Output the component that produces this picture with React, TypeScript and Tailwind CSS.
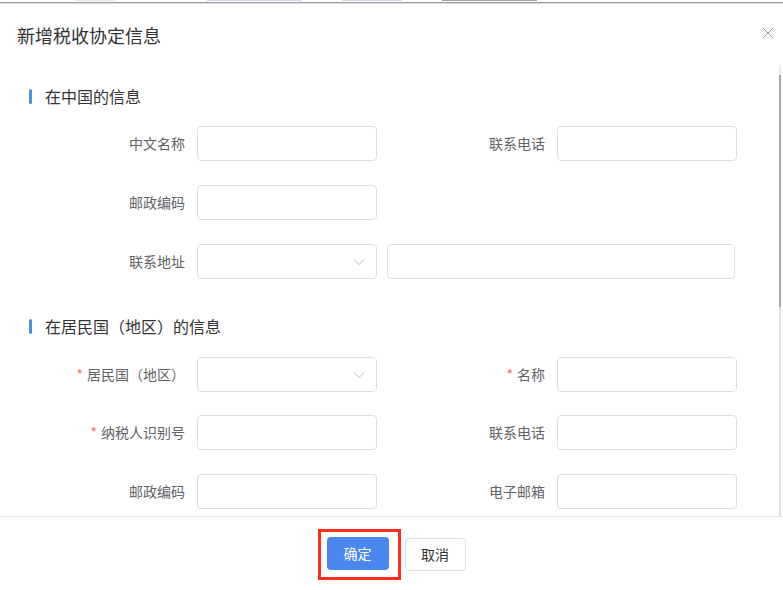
import React from "react";

const Chevron = () => (
  <svg width="12" height="8" viewBox="0 0 12 8" fill="none">
    <polyline points="1,1.5 6,6.5 11,1.5" stroke="#b4b8bf" strokeWidth="1" />
  </svg>
);

const Input = ({ w = "w-[180px]" }: { w?: string }) => (
  <div className={`${w} h-[35px] rounded-[4px] border border-[#dcdfe6] bg-white`} />
);

const Select = () => (
  <div className="w-[180px] h-[35px] rounded-[4px] border border-[#dcdfe6] bg-white flex items-center justify-end pr-[11px]">
    <Chevron />
  </div>
);

const Label = ({ text, req, w = "w-[120px]" }: { text: string; req?: boolean; w?: string }) => (
  <div className={`${w} text-right text-[14px] text-[#606266] leading-[35px] mr-[12px] shrink-0`}>
    {req && <span className="text-[#f56c6c] mr-[4px]">*</span>}
    {text}
  </div>
);

const Field = ({ label, req, select }: { label: string; req?: boolean; select?: boolean }) => (
  <div className="flex items-center">
    <Label text={label} req={req} />
    {select ? <Select /> : <Input />}
  </div>
);

const SectionTitle = ({ text }: { text: string }) => (
  <div className="flex items-center h-[20px] pl-[29px]">
    <div className="w-[3px] h-[15px] rounded-full bg-[#4a8fe3] mr-[13px]" />
    <span className="text-[16px] text-[#333] leading-[20px]">{text}</span>
  </div>
);

export default function App() {
  return (
    <div
      className="w-[783px] h-[590px] overflow-hidden bg-white flex flex-col"
      style={{ fontFamily: '"Noto Sans CJK SC", "Noto Sans", sans-serif' }}
    >
      {/* background page strip */}
      <div className="h-[5px] shrink-0 overflow-hidden bg-white">
        <div className="flex items-start h-[2px]">
          <div className="ml-[75px] w-[40px] h-[1px] bg-[#e2e2e2]" />
          <div className="ml-[92px] w-[95px] h-[1px] bg-[#cdd7ea]" />
          <div className="ml-[40px] w-[60px] h-[1px] bg-[#cdd7ea]" />
          <div className="ml-[40px] w-[95px] h-[1px] bg-[#a0a0a0]" />
        </div>
        <div className="h-[1px] bg-[#9a9a9a]" />
        <div className="h-[1px] bg-[#dcdcdc]" />
      </div>

      {/* header */}
      <div className="h-[60px] shrink-0 flex items-center justify-between pl-[17px] pr-[8px]">
        <span className="text-[18px] text-[#303133] leading-[24px]">新增税收协定信息</span>
        <svg width="12" height="12" viewBox="0 0 12 12" className="mb-[5px] mr-[1px]">
          <path d="M1 1L11 11M11 1L1 11" stroke="#9a9a9a" strokeWidth="1" />
        </svg>
      </div>

      {/* body */}
      <div className="h-[451px] shrink-0 flex overflow-hidden">
        <div className="flex-1 flex flex-col pt-[21px]">
          <SectionTitle text="在中国的信息" />
          <div className="flex items-center pl-[65px] mt-[20px]">
            <Field label="中文名称" />
            <div className="ml-[48px]">
              <Field label="联系电话" />
            </div>
          </div>
          <div className="flex items-center pl-[65px] mt-[24px]">
            <Field label="邮政编码" />
          </div>
          <div className="flex items-center pl-[65px] mt-[24px]">
            <Field label="联系地址" select />
            <div className="ml-[10px]">
              <Input w="w-[348px]" />
            </div>
          </div>

          <div className="mt-[37px]">
            <SectionTitle text="在居民国（地区）的信息" />
          </div>
          <div className="flex items-center pl-[65px] mt-[21px]">
            <Field label="居民国（地区）" req select />
            <div className="ml-[48px]">
              <Field label="名称" req />
            </div>
          </div>
          <div className="flex items-center pl-[65px] mt-[23px]">
            <Field label="纳税人识别号" req />
            <div className="ml-[48px]">
              <Field label="联系电话" />
            </div>
          </div>
          <div className="flex items-center pl-[65px] mt-[24px]">
            <Field label="邮政编码" />
            <div className="ml-[48px]">
              <Field label="电子邮箱" />
            </div>
          </div>
        </div>
        {/* scrollbar */}
        <div className="w-[3px] shrink-0 mr-[1px] flex flex-col">
          <div className="w-[2px] h-[10px] bg-[#ededed]" />
          <div className="w-[2px] h-[232px] bg-[#a8a8a8]" />
          <div className="w-[2px] flex-1 bg-[#e0e0e0]" />
        </div>
      </div>

      {/* footer */}
      <div className="flex-1 border-t border-[#e4e7ed] flex justify-center items-start pt-[12px]">
        <div className="flex items-center">
          <div className="border-[3px] border-[#ff2d1a] pl-[6px] pr-[9px] pt-[5px] pb-[7px]">
            <button className="w-[62px] h-[33px] rounded-[4px] bg-[#4a87ee] text-white text-[14px]">
              确定
            </button>
          </div>
          <button className="ml-[4px] w-[61px] h-[33px] rounded-[4px] border border-[#dcdfe6] bg-white text-[#303133] text-[14px]">
            取消
          </button>
        </div>
      </div>
    </div>
  );
}
